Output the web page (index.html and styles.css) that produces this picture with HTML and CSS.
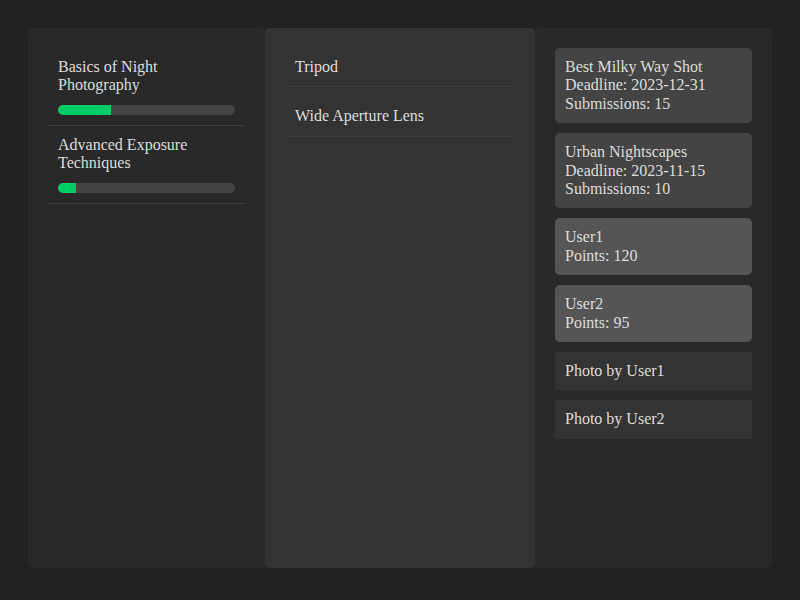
FILE: index.html
```html
<!DOCTYPE html>
<html>
<head>
<meta charset="utf-8">
<link rel="stylesheet" href="styles.css">
</head>
<body>
<div class="layout">
  <section class="panel panel-side">
    <div class="course">
      <div class="course-title">Basics of Night Photography</div>
      <div class="progress"><div class="progress-fill" style="width:30%"></div></div>
    </div>
    <div class="course">
      <div class="course-title">Advanced Exposure Techniques</div>
      <div class="progress"><div class="progress-fill" style="width:10%"></div></div>
    </div>
  </section>
  <section class="panel panel-mid">
    <div class="gear">Tripod</div>
    <div class="gear">Wide Aperture Lens</div>
  </section>
  <section class="panel panel-side">
    <div class="card challenge">Best Milky Way Shot<br>Deadline: 2023-12-31<br>Submissions: 15</div>
    <div class="card challenge">Urban Nightscapes<br>Deadline: 2023-11-15<br>Submissions: 10</div>
    <div class="card user">User1<br>Points: 120</div>
    <div class="card user">User2<br>Points: 95</div>
    <div class="card photo">Photo by User1</div>
    <div class="card photo">Photo by User2</div>
  </section>
</div>
</body>
</html>
```
FILE: styles.css
```css
html, body {
  margin: 0;
  background: #222222;
}
body {
  padding: 28px;
  font-family: "Liberation Serif", "Times New Roman", serif;
  font-size: 16px;
  line-height: 1.15;
  color: #dddddd;
}
.layout {
  display: grid;
  grid-template-columns: 237px 270px 237px;
  height: 540px;
}
.panel {
  border-radius: 5px;
  padding: 20px;
  box-sizing: border-box;
}
.panel-side {
  background: #292929;
}
.panel-mid {
  background: #333333;
}
.course {
  padding: 10px;
  border-bottom: 1px solid #3e3e3e;
}
.progress {
  margin-top: 10px;
  height: 10px;
  border-radius: 5px;
  background: #444444;
  overflow: hidden;
}
.progress-fill {
  height: 100%;
  background: #00cc66;
}
.gear {
  padding: 10px;
  border-bottom: 1px solid #3d3d3d;
  margin-bottom: 10px;
}
.card {
  padding: 10px;
  margin-bottom: 10px;
}
.challenge {
  background: #444444;
  border-radius: 5px;
}
.user {
  background: #555555;
  border-radius: 5px;
}
.photo {
  background: #333333;
}
```
